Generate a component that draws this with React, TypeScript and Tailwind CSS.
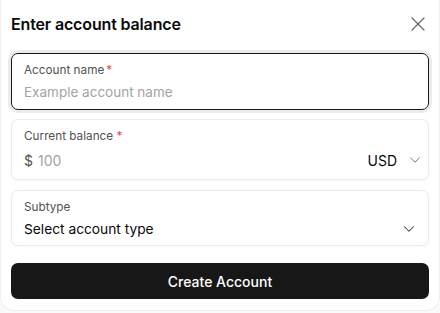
import React from 'react';
import { X, ChevronDown } from 'lucide-react';

const App: React.FC = () => {
  return (
    <div className="h-[313px] w-[440px] bg-[#fafafa] font-['Inter',sans-serif] text-[#0a0a0a]">
      <div className="flex h-[311px] flex-col rounded-b-[14px] border border-t-0 border-[#efefef] bg-white px-[10px]">
        {/* Header */}
        <div className="mt-[10px] flex h-7 items-center justify-between">
          <h2 className="text-[16px] font-semibold tracking-[-0.15px]">Enter account balance</h2>
          <X size={24} strokeWidth={1.25} className="-mr-[1px] text-[#6b6b6b]" />
        </div>

        {/* Account name */}
        <div className="mt-[15px] flex flex-col rounded-[7px] border border-[#171717] px-3 pb-[7px] pt-2 ring-[3px] ring-[#ebebeb]">
          <label className="h-4 text-[11.75px] leading-4 text-[#525252]">
            Account name<span className="ml-[2px] text-[#e5484d]">*</span>
          </label>
          <div className="mt-1 h-5 text-[13.5px] leading-5 text-[#a3a3a3]">Example account name</div>
        </div>

        {/* Current balance */}
        <div className="mt-[9px] flex flex-col rounded-[7px] border border-[#ebebeb] px-3 pb-[7px] pt-2 shadow-[0_1px_2px_rgba(0,0,0,0.04)]">
          <label className="h-4 text-[11.75px] leading-4 text-[#525252]">
            Current balance <span className="text-[#e5484d]">*</span>
          </label>
          <div className="mt-1 flex h-6 items-center justify-between text-[14px]">
            <div className="flex items-center gap-[5px]">
              <span className="text-[#525252]">$</span>
              <span className="text-[#a3a3a3]">100</span>
            </div>
            <div className="-mr-[8px] flex items-center gap-[9px]">
              <span className="text-[#0a0a0a]">USD</span>
              <ChevronDown size={18} strokeWidth={1.3} className="text-[#737373]" />
            </div>
          </div>
        </div>

        {/* Subtype */}
        <div className="mt-[10px] flex flex-col rounded-[7px] border border-[#ebebeb] px-3 pb-[6px] pt-2 shadow-[0_1px_2px_rgba(0,0,0,0.04)]">
          <label className="h-4 text-[11.75px] leading-4 text-[#525252]">Subtype</label>
          <div className="mt-1 flex h-5 items-center justify-between">
            <span className="text-[13.75px] text-[#0a0a0a]">Select account type</span>
            <ChevronDown size={18} strokeWidth={1.4} className="-mr-[2px] text-[#404040]" />
          </div>
        </div>

        {/* Submit */}
        <button className="mt-[17px] flex h-[36px] w-full items-center justify-center rounded-[7px] bg-[#171717] text-[14px] font-medium text-white">
          Create Account
        </button>
      </div>
    </div>
  );
};

export default App;
